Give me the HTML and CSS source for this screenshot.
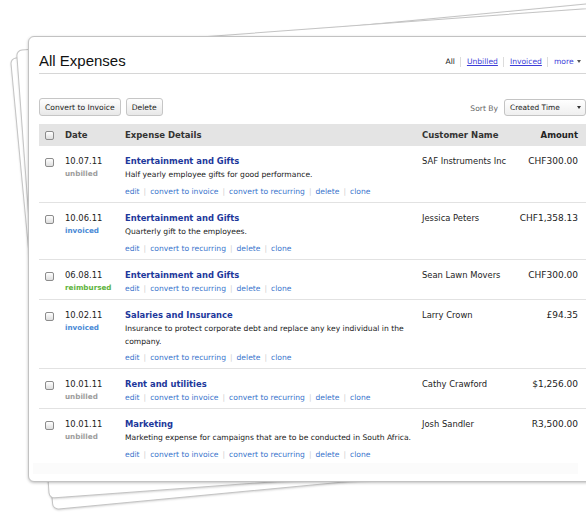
FILE: index.html
```html
<!DOCTYPE html>
<html lang="en">
<head>
    <meta charset="UTF-8">
    <title>All Expenses</title>
    <link rel="stylesheet" href="styles.css">
</head>
<body>

    <!-- papers stacked behind the card -->
    <div class="sheet sheet-back"></div>
    <div class="sheet sheet-mid"></div>

    <div class="card">
        <div class="page-head">
            <h1>All Expenses</h1>
            <div class="filters">
                <span class="filter current">All</span>
                <a class="filter" href="#">Unbilled</a>
                <a class="filter" href="#">Invoiced</a>
                <a class="filter more" href="#">more <span class="caret"></span></a>
            </div>
        </div>

        <div class="toolbar">
            <div class="bulk">
                <button class="btn">Convert to Invoice</button>
                <button class="btn">Delete</button>
            </div>
            <div class="sort">
                <span class="sort-label">Sort By</span>
                <div class="select">Created Time <span class="caret dark"></span></div>
            </div>
        </div>

        <div class="table">
            <div class="row head">
                <div class="cell-check"><span class="check"></span></div>
                <div>Date</div>
                <div>Expense Details</div>
                <div>Customer Name</div>
                <div class="amount">Amount</div>
            </div>

            <div class="row">
                <div class="cell-check"><span class="check"></span></div>
                <div class="date">10.07.11<span class="status unbilled">unbilled</span></div>
                <div class="details">
                    <a class="title" href="#">Entertainment and Gifts</a>
                    <p class="desc">Half yearly employee gifts for good performance.</p>
                    <div class="links"><a href="#">edit</a><span class="sep">|</span><a href="#">convert to invoice</a><span class="sep">|</span><a href="#">convert to recurring</a><span class="sep">|</span><a href="#">delete</a><span class="sep">|</span><a href="#">clone</a></div>
                </div>
                <div class="customer">SAF Instruments Inc</div>
                <div class="amount">CHF300.00</div>
            </div>

            <div class="row">
                <div class="cell-check"><span class="check"></span></div>
                <div class="date">10.06.11<span class="status invoiced">invoiced</span></div>
                <div class="details">
                    <a class="title" href="#">Entertainment and Gifts</a>
                    <p class="desc">Quarterly gift to the employees.</p>
                    <div class="links"><a href="#">edit</a><span class="sep">|</span><a href="#">convert to recurring</a><span class="sep">|</span><a href="#">delete</a><span class="sep">|</span><a href="#">clone</a></div>
                </div>
                <div class="customer">Jessica Peters</div>
                <div class="amount">CHF1,358.13</div>
            </div>

            <div class="row">
                <div class="cell-check"><span class="check"></span></div>
                <div class="date">06.08.11<span class="status reimbursed">reimbursed</span></div>
                <div class="details">
                    <a class="title" href="#">Entertainment and Gifts</a>
                    <div class="links"><a href="#">edit</a><span class="sep">|</span><a href="#">convert to recurring</a><span class="sep">|</span><a href="#">delete</a><span class="sep">|</span><a href="#">clone</a></div>
                </div>
                <div class="customer">Sean Lawn Movers</div>
                <div class="amount">CHF300.00</div>
            </div>

            <div class="row">
                <div class="cell-check"><span class="check"></span></div>
                <div class="date">10.02.11<span class="status invoiced">invoiced</span></div>
                <div class="details">
                    <a class="title" href="#">Salaries and Insurance</a>
                    <p class="desc two-line">Insurance to protect corporate debt and replace any key individual in the company.</p>
                    <div class="links"><a href="#">edit</a><span class="sep">|</span><a href="#">convert to recurring</a><span class="sep">|</span><a href="#">delete</a><span class="sep">|</span><a href="#">clone</a></div>
                </div>
                <div class="customer">Larry Crown</div>
                <div class="amount">£94.35</div>
            </div>

            <div class="row">
                <div class="cell-check"><span class="check"></span></div>
                <div class="date">10.01.11<span class="status unbilled">unbilled</span></div>
                <div class="details">
                    <a class="title" href="#">Rent and utilities</a>
                    <div class="links"><a href="#">edit</a><span class="sep">|</span><a href="#">convert to invoice</a><span class="sep">|</span><a href="#">convert to recurring</a><span class="sep">|</span><a href="#">delete</a><span class="sep">|</span><a href="#">clone</a></div>
                </div>
                <div class="customer">Cathy Crawford</div>
                <div class="amount">$1,256.00</div>
            </div>

            <div class="row last">
                <div class="cell-check"><span class="check"></span></div>
                <div class="date">10.01.11<span class="status unbilled">unbilled</span></div>
                <div class="details">
                    <a class="title" href="#">Marketing</a>
                    <p class="desc">Marketing expense for campaigns that are to be conducted in South Africa.</p>
                    <div class="links"><a href="#">edit</a><span class="sep">|</span><a href="#">convert to invoice</a><span class="sep">|</span><a href="#">convert to recurring</a><span class="sep">|</span><a href="#">delete</a><span class="sep">|</span><a href="#">clone</a></div>
                </div>
                <div class="customer">Josh Sandler</div>
                <div class="amount">R3,500.00</div>
            </div>
        </div>
        <div class="table-foot"></div>
    </div>

</body>
</html>
```

FILE: styles.css
```css
html, body {
    margin: 0;
    height: 100%;
    overflow: hidden;
}
body {
    font-family: 'DejaVu Sans', 'Liberation Sans', sans-serif;
    background-color: #fff;
    color: #222;
    padding: 36px 0 0 28px;
    box-sizing: border-box;
    position: relative;
}
a {
    text-decoration: none;
}

/* background papers */
.sheet {
    position: absolute;
    width: 640px;
    background-color: #fff;
    border: 1px solid #c4c4c4;
    border-radius: 6px;
    box-shadow: 0 1px 2px rgba(0, 0, 0, 0.15);
    transform-origin: 0 0;
}
.sheet-back {
    left: 10px;
    top: 58px;
    height: 452px;
    transform: rotate(-5.4deg);
}
.sheet-mid {
    left: 16px;
    top: 50px;
    height: 448px;
    transform: rotate(-4.2deg);
}

.card {
    position: relative;
    z-index: 1;
    width: 571px;
    box-sizing: border-box;
    background-color: #fff;
    border: 1px solid #c2c2c2;
    border-radius: 6px;
    box-shadow: 0 1px 3px rgba(0, 0, 0, 0.25);
    padding: 0 12px 7px 10px;
}

/* title row */
.page-head {
    display: flex;
    justify-content: space-between;
    align-items: flex-end;
    padding: 14px 0 2px 0;
    border-bottom: 1px solid #d6d6d6;
}
.page-head h1 {
    margin: 0;
    font-family: 'Liberation Sans', Arial, sans-serif;
    font-weight: normal;
    font-size: 15px;
    line-height: 20px;
    color: #111;
}
.filters {
    display: flex;
    align-items: center;
    font-size: 7.6px;
    padding: 0 5px 4px 0;
}
.filter {
    display: block;
    line-height: 10px;
    padding: 0 5px 0 6px;
    border-left: 1px solid #dcdcdc;
    color: #3d3dd8;
    text-decoration: underline;
}
.filter.current {
    border-left: none;
    color: #111;
    text-decoration: none;
}
.filter.more {
    text-decoration: none;
    padding-right: 0;
}
.caret {
    display: inline-block;
    width: 0;
    height: 0;
    margin-left: 1px;
    vertical-align: 1px;
    border-left: 2.5px solid transparent;
    border-right: 2.5px solid transparent;
    border-top: 3px solid #555;
}
.caret.dark {
    border-top-color: #333;
}

/* buttons + sort */
.toolbar {
    display: flex;
    justify-content: space-between;
    align-items: center;
    margin-top: 24px;
    height: 18px;
}
.bulk {
    display: flex;
    gap: 5px;
}
.btn {
    height: 18px;
    padding: 0 5px;
    font-family: 'DejaVu Sans', sans-serif;
    font-size: 7.6px;
    color: #222;
    background: linear-gradient(#fefefe, #e8e8e8);
    border: 1px solid #c6c6c6;
    border-radius: 3px;
}
.sort {
    display: flex;
    align-items: center;
    gap: 6px;
}
.sort-label {
    font-size: 7.6px;
    color: #666;
    padding-top: 3px;
}
.select {
    display: flex;
    justify-content: space-between;
    align-items: center;
    box-sizing: border-box;
    width: 82px;
    height: 17px;
    padding: 0 4px 0 5px;
    font-size: 7.4px;
    color: #222;
    background: linear-gradient(#fff, #efefef);
    border: 1px solid #c4c4c4;
    border-radius: 3px;
}

/* table */
.table {
    margin-top: 8px;
}
.row {
    display: grid;
    grid-template-columns: 26px 60px 297px 1fr auto;
    align-items: start;
    padding: 8px 0 3px 0;
    border-bottom: 1px solid #e2e2e2;
}
.row.last {
    border-bottom: none;
    padding-bottom: 1px;
}
.row.head {
    height: 22px;
    box-sizing: border-box;
    padding: 0;
    align-items: center;
    background-color: #e4e4e4;
    border-bottom: none;
    font-weight: bold;
    font-size: 8.5px;
    color: #333;
}
.cell-check {
    padding-left: 6px;
    display: flex;
}
.row .cell-check {
    padding-top: 4px;
}
.row.head .cell-check {
    padding-top: 0;
}
.check {
    display: block;
    width: 9px;
    height: 9px;
    box-sizing: border-box;
    border: 1px solid #8c8c8c;
    border-radius: 2px;
    background: linear-gradient(#fff, #dedede);
}
.date {
    font-size: 8.4px;
    line-height: 14px;
    color: #222;
}
.status {
    display: block;
    font-weight: bold;
    font-size: 7.2px;
    line-height: 12px;
}
.status.unbilled {
    color: #9c9c9c;
}
.status.invoiced {
    color: #4a8ad6;
}
.status.reimbursed {
    color: #5cb33c;
}
.details .title {
    display: block;
    font-weight: bold;
    font-size: 8.4px;
    line-height: 14px;
    color: #1d389b;
}
.desc {
    margin: 0 0 4px 0;
    font-size: 7.6px;
    line-height: 13px;
    color: #1a1a1a;
}
.desc.two-line {
    margin-bottom: 3px;
}
.links {
    font-size: 7.6px;
    line-height: 14px;
}
.links a {
    color: #3a75cc;
}
.links .sep {
    margin: 0 4px;
    color: #cfcfcf;
}
.customer {
    font-size: 8.4px;
    line-height: 14px;
    color: #222;
}
.amount {
    text-align: right;
    padding-right: 8px;
}
.row .amount {
    font-size: 9px;
    line-height: 14px;
    color: #222;
}
.row.head .amount {
    font-size: 8.5px;
}
.table-foot {
    height: 11px;
    margin: 0 8px 0 -6px;
    background-color: #fbfbfb;
}
```
